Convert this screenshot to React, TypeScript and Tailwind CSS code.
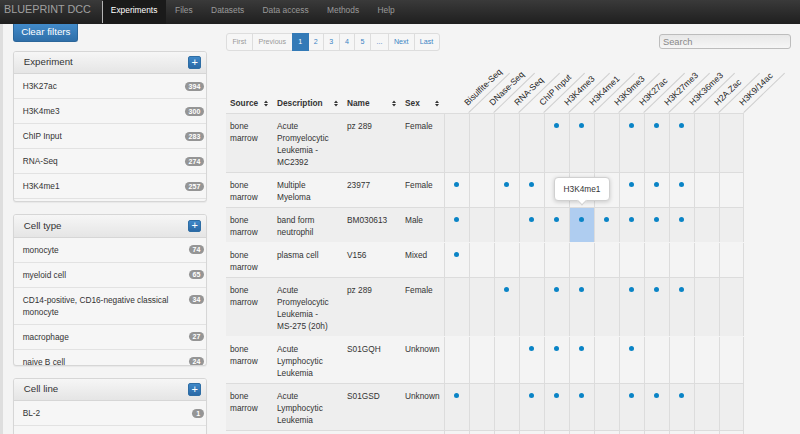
import React from "react";

type Item = { label: string; count: number };

const experiments: Item[] = [
  { label: "H3K27ac", count: 394 },
  { label: "H3K4me3", count: 300 },
  { label: "ChIP Input", count: 283 },
  { label: "RNA-Seq", count: 274 },
  { label: "H3K4me1", count: 257 },
];

const cellTypes: Item[] = [
  { label: "monocyte", count: 74 },
  { label: "myeloid cell", count: 65 },
  { label: "CD14-positive, CD16-negative classical monocyte", count: 34 },
  { label: "macrophage", count: 27 },
  { label: "naive B cell", count: 24 },
  { label: "neutrophil", count: 20 },
];

const cellLines: Item[] = [
  { label: "BL-2", count: 1 },
  { label: "C0010K", count: 1 },
  { label: "C0011I", count: 1 },
  { label: "C002CO", count: 1 },
  { label: "C004GD", count: 1 },
];

const assays = [
  "Bisulfite-Seq",
  "DNase-Seq",
  "RNA-Seq",
  "ChIP Input",
  "H3K4me3",
  "H3K4me1",
  "H3K9me3",
  "H3K27ac",
  "H3K27me3",
  "H3K36me3",
  "H2A.Zac",
  "H3K9/14ac",
];

type Row = {
  src: string;
  desc: string;
  name: string;
  sex: string;
  dots: number[];
  dark: boolean;
  line: boolean;
  hl?: number;
};

const rows: Row[] = [
  { src: "bone marrow", desc: "Acute Promyelocytic Leukemia - MC2392", name: "pz 289", sex: "Female", dots: [4, 5, 7, 8, 9], dark: true, line: true },
  { src: "bone marrow", desc: "Multiple Myeloma", name: "23977", sex: "Female", dots: [0, 2, 3, 7, 8, 9], dark: false, line: true },
  { src: "bone marrow", desc: "band form neutrophil", name: "BM030613", sex: "Male", dots: [0, 3, 4, 5, 6, 7, 8, 9], dark: true, line: true, hl: 5 },
  { src: "bone marrow", desc: "plasma cell", name: "V156", sex: "Mixed", dots: [0], dark: false, line: false },
  { src: "bone marrow", desc: "Acute Promyelocytic Leukemia - MS-275 (20h)", name: "pz 289", sex: "Female", dots: [2, 4, 5, 7, 8, 9], dark: true, line: true },
  { src: "bone marrow", desc: "Acute Lymphocytic Leukemia", name: "S01GQH", sex: "Unknown", dots: [3, 4, 5, 7], dark: false, line: false },
  { src: "bone marrow", desc: "Acute Lymphocytic Leukemia", name: "S01GSD", sex: "Unknown", dots: [0, 3, 4, 5, 7, 8, 9], dark: true, line: true },
  { src: "bone marrow", desc: "Acute Myeloid Leukemia", name: "S00BHQ", sex: "Male", dots: [0, 3, 4, 5, 7], dark: false, line: true },
];

function SortIcon() {
  return (
    <svg width="4" height="7" viewBox="0 0 4 7" className="shrink-0">
      <path d="M0 3L2 0.6L4 3Z M0 4L2 6.4L4 4Z" fill="#333" />
    </svg>
  );
}

function Badge({ n }: { n: number }) {
  return (
    <span className="shrink-0 mt-[1.5px] h-[9px] min-w-[12px] px-[4px] rounded-full bg-[#959595] text-white text-[7px] font-bold leading-[9px] text-center">
      {n}
    </span>
  );
}

function Panel({ title, items, className = "" }: { title: string; items: Item[]; className?: string }) {
  return (
    <div className={`shrink-0 border border-[#d6d6d6] rounded-[3px] bg-[#f6f6f6] shadow-[0_1px_1px_rgba(0,0,0,0.05)] overflow-hidden ${className}`}>
      <div className="h-[21.5px] box-content flex items-center justify-between pl-[9.5px] pr-[5px] bg-gradient-to-b from-[#f6f6f6] to-[#e5e5e5] border-b border-[#d6d6d6]">
        <span className="text-[9.7px] text-[#333]">{title}</span>
        <span className="w-[13px] h-[12.5px] rounded-[2px] bg-gradient-to-b from-[#3f88c8] to-[#2a69a6] border border-[#2e6da4] text-white text-[11px] leading-none flex items-center justify-center pb-[1px]">
          +
        </span>
      </div>
      <div className="h-[127px] overflow-hidden">
        {items.map((it) => (
          <div
            key={it.label}
            className="flex justify-between items-start gap-[6px] pl-[8.4px] pr-[2px] py-[6px] border-b border-[#e2e2e2] leading-[12px] text-[8.3px] text-[#333]"
          >
            <span>{it.label}</span>
            <Badge n={it.count} />
          </div>
        ))}
      </div>
    </div>
  );
}

const pages: { t: string; w: string; kind: "off" | "on" | "act" }[] = [
  { t: "First", w: "w-[26.7px]", kind: "off" },
  { t: "Previous", w: "w-[41.3px]", kind: "off" },
  { t: "1", w: "w-[16.7px]", kind: "act" },
  { t: "2", w: "w-[16.3px]", kind: "on" },
  { t: "3", w: "w-[16.6px]", kind: "on" },
  { t: "4", w: "w-[16.7px]", kind: "on" },
  { t: "5", w: "w-[16.7px]", kind: "on" },
  { t: "...", w: "w-[19px]", kind: "on" },
  { t: "Next", w: "w-[26.6px]", kind: "on" },
  { t: "Last", w: "w-[26px]", kind: "on" },
];

function Pagination() {
  return (
    <div className="flex h-[17.4px] text-[7.1px]">
      {pages.map((p, i) => (
        <div
          key={p.t}
          className={`${p.w} h-full flex items-center justify-center border ${
            i > 0 ? "-ml-px" : ""
          } ${i === 0 ? "rounded-l-[3px]" : ""} ${i === pages.length - 1 ? "rounded-r-[3px]" : ""} ${
            p.kind === "act"
              ? "bg-[#337ab7] border-[#337ab7] text-white relative"
              : p.kind === "off"
              ? "bg-[#f6f6f6] border-[#dddddd] text-[#9a9a9a]"
              : "bg-[#f6f6f6] border-[#dddddd] text-[#3a84c4]"
          }`}
        >
          {p.t}
        </div>
      ))}
    </div>
  );
}

const gridCols = "grid grid-cols-[47px_70px_58px_43px_repeat(12,25px)]";

function Table() {
  return (
    <div className="w-[518px] text-[8.3px] text-[#333]">
      {/* header */}
      <div className={`${gridCols} h-[62px] items-end`}>
        {["Source", "Description", "Name", "Sex"].map((h) => (
          <div key={h} className="flex items-center justify-between pl-[4px] pr-[5px] pb-[3.5px] leading-[12px] font-bold">
            <span>{h}</span>
            <SortIcon />
          </div>
        ))}
        {assays.map((a) => (
          <div key={a} className="relative h-full">
            <div className="absolute left-full bottom-0 origin-bottom-left -rotate-[44deg] w-[57px] border-b border-[#cfcfcf] pl-[4px] pb-[3px] text-[8.6px] leading-[10px] whitespace-nowrap text-[#222]">
              {a}
            </div>
          </div>
        ))}
      </div>
      {/* rows */}
      {rows.map((r, ri) => (
        <div
          key={ri}
          className={`${gridCols} border-t ${r.line ? "border-[#dcdcdc]" : "border-transparent"} ${
            r.dark ? "bg-[#eeeeee]" : "bg-[#f4f4f4]"
          } leading-[12px]`}
        >
          <div className="pl-[4px] pr-[6px] pt-[6px] pb-[4px]">{r.src}</div>
          <div className="pl-[4px] pr-[8px] pt-[6px] pb-[4px]">{r.desc}</div>
          <div className="pl-[4px] pr-[4px] pt-[6px] pb-[4px]">{r.name}</div>
          <div className="pl-[4px] pr-[2px] pt-[6px] pb-[4px]">{r.sex}</div>
          {assays.map((a, ci) => (
            <div
              key={a}
              className={`relative border-l border-[#dcdcdc] ${ci === assays.length - 1 ? "border-r" : ""} ${
                r.hl === ci ? "bg-[#afcdf0]" : ""
              } pt-[6px]`}
            >
              <div className="h-[12px] flex items-center justify-center">
                {r.dots.includes(ci) && <span className="w-[5px] h-[5px] rounded-full bg-[#0a84c6]" />}
              </div>
              {r.hl === ci && (
                <div className="absolute z-10 left-1/2 -translate-x-1/2 bottom-[calc(100%+7px)] w-[56px] h-[24px] bg-white border border-[#d0d0d0] rounded-[4px] shadow-[0_1px_4px_rgba(0,0,0,0.18)] flex items-center justify-center text-[8.3px] text-[#333]">
                  H3K4me1
                  <span className="absolute left-1/2 -translate-x-1/2 -bottom-[4px] w-[7px] h-[7px] rotate-45 bg-white border-r border-b border-[#d0d0d0]" />
                </div>
              )}
            </div>
          ))}
        </div>
      ))}
    </div>
  );
}

export default function App() {
  return (
    <div className="w-[800px] h-[434px] overflow-hidden bg-[#f4f4f4] flex flex-col font-['Liberation_Sans',Arial,Helvetica,sans-serif] text-[#333]">
      {/* navbar */}
      <nav className="h-[24px] shrink-0 flex items-stretch bg-gradient-to-b from-[#3a3a3a] to-[#1f1f1f]">
        <div className="pl-[4px] pr-[11px] text-[10.8px] leading-[19px] text-[#a0a0a0]">BLUEPRINT DCC</div>
        <div className="w-px bg-[#b5b5b5] my-[1px]" />
        <div className="pl-[8px] pr-[8.5px] bg-[#1a1a1a] text-white text-[8.4px] leading-[20px]">Experiments</div>
        {["Files", "Datasets", "Data access", "Methods", "Help"].map((l) => (
          <div key={l} className="px-[9.2px] text-[#9a9a9a] text-[8.4px] leading-[20px]">
            {l}
          </div>
        ))}
      </nav>
      <div className="flex flex-1 min-h-0">
        <div className="w-[3px] shrink-0 bg-[#dedede]" />
        {/* sidebar */}
        <div className="ml-[10.3px] w-[194px] shrink-0 flex flex-col">
          <div className="shrink-0 w-[65px] h-[17.7px] rounded-b-[3px] bg-gradient-to-b from-[#428bca] to-[#2f6fa9] border border-t-0 border-[#2b669a] text-white text-[9.75px] leading-[15px] text-center">
            Clear filters
          </div>
          <Panel title="Experiment" items={experiments} className="mt-[9.3px]" />
          <Panel title="Cell type" items={cellTypes} className="mt-[12px]" />
          <Panel title="Cell line" items={cellLines} className="mt-[12px]" />
        </div>
        {/* main */}
        <div className="ml-[18.7px] flex-1 flex flex-col">
          <div className="flex items-start justify-between mt-[9.3px] pr-[9px]">
            <Pagination />
            <input
              placeholder="Search"
              className="mt-[0.7px] w-[132px] h-[15.3px] px-[3px] rounded-[3px] border border-[#bdbdbd] bg-gradient-to-b from-[#e8e8e8] to-[#f6f6f6] text-[9.3px] placeholder:text-[#888] outline-none"
            />
          </div>
          <Table />
        </div>
      </div>
    </div>
  );
}
